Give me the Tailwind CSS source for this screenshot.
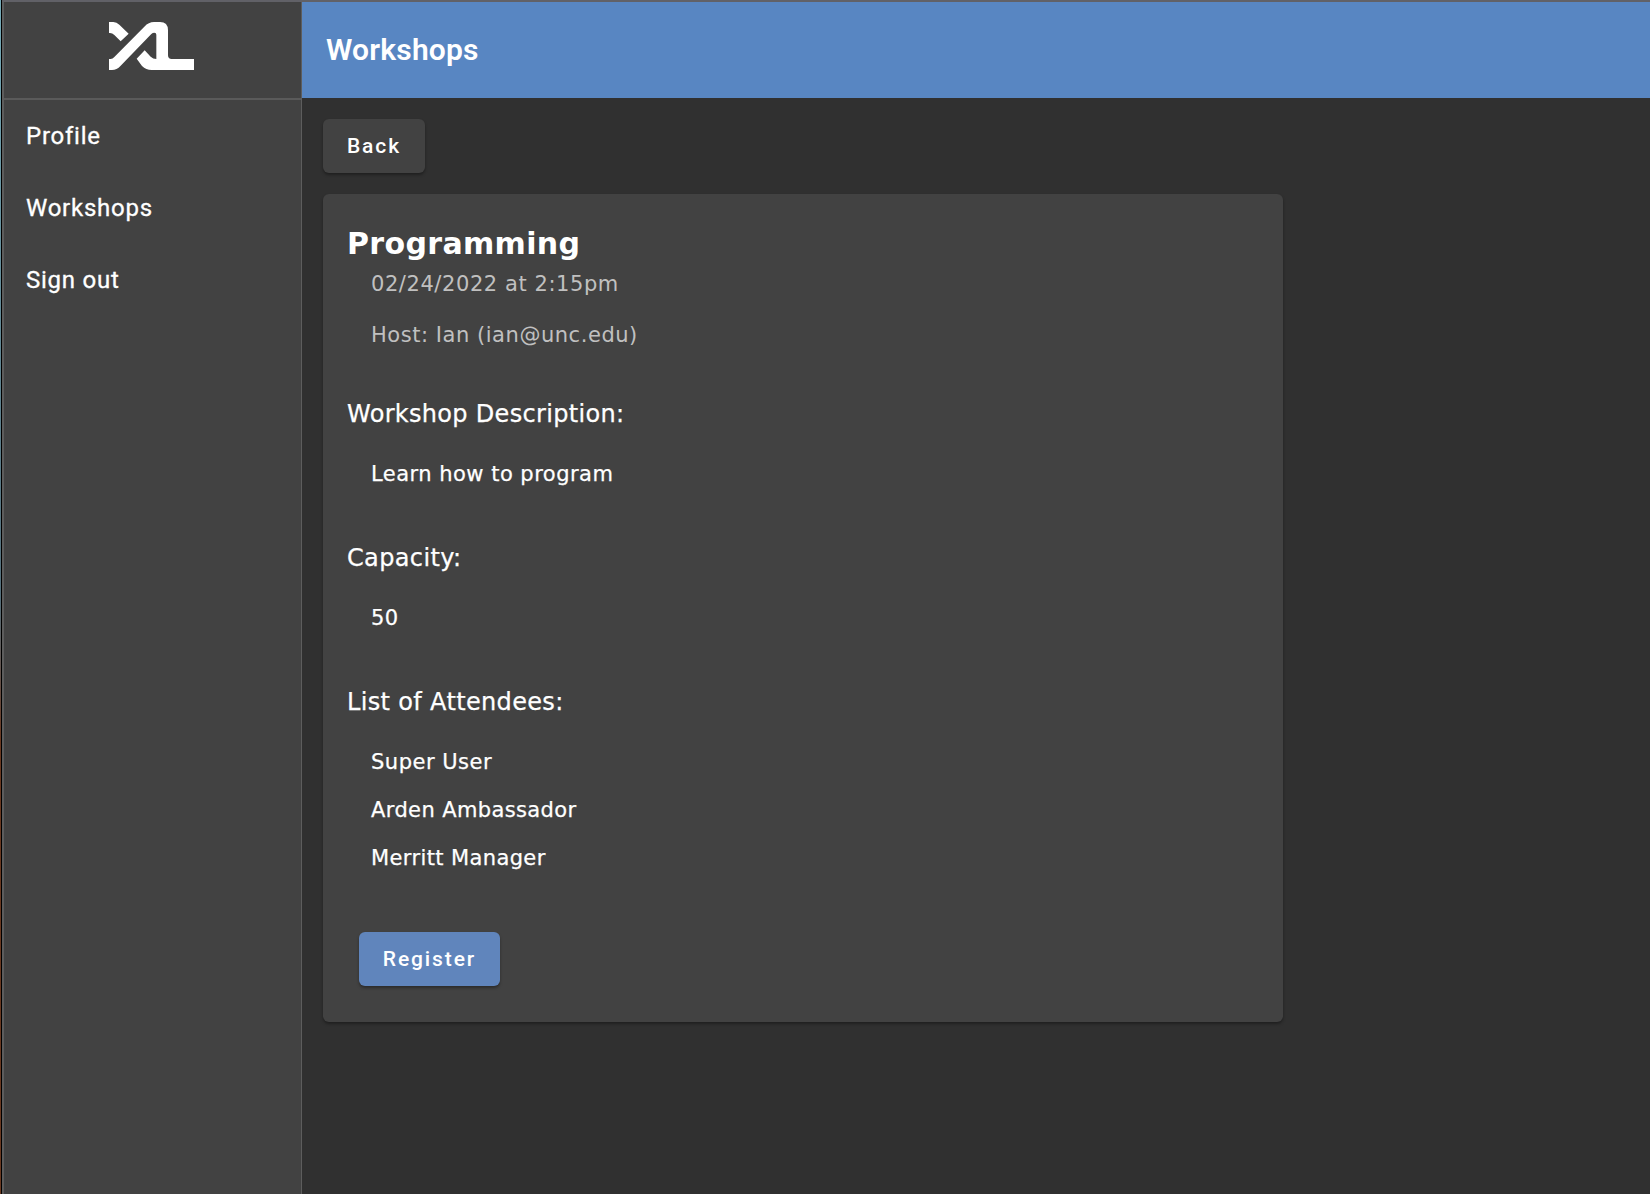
<!DOCTYPE html>
<html lang="en">
<head>
<meta charset="utf-8">
<title>Workshops</title>
<script src="https://cdn.jsdelivr.net/npm/@tailwindcss/browser@4"></script>
</head>
<body class="flex h-screen overflow-hidden bg-[#303030] font-['Roboto',sans-serif] text-white">
  <div class="w-px shrink-0 bg-linear-to-b from-[#76abb8] from-0% via-[#55707c] via-50% to-[#6b3a22] to-62%"></div>
  <div class="w-px shrink-0 bg-black"></div>
  <div class="flex min-w-0 flex-1 border-t-2 border-[#616167]">
    <aside class="flex w-[300px] shrink-0 flex-col border-r border-l-2 border-r-[#5d5d5d] border-l-[#5d5d5d] bg-[#424242]">
      <div class="flex h-[98px] justify-center border-b-2 border-[#5a5a5a] pt-5">
        <svg class="mr-0.5 h-12 w-[85px]" viewBox="57 66 255 144" fill="#fff">
          <path d="M57 66H70Q80 66 88 74L116 101L92 124L73 105Q67 99 60 99H57Z"/>
          <path d="M57 177H62Q68 177 73 171L163 80Q176 66 192 66H210Q234 66 234 91V166Q234 177 245 177H312V210H185Q168 210 156 198L140 176L164 151L182 170Q189 177 199 177V104Q199 98 193 98Q188 98 184 102L92 197Q80 210 66 210H57Z"/>
        </svg>
      </div>
      <nav class="flex flex-col pl-[22px] text-2xl/[72px] tracking-[0.75px] [-webkit-text-stroke:0.3px_white]">
        <a>Profile</a>
        <a>Workshops</a>
        <a>Sign out</a>
      </nav>
    </aside>
    <main class="flex min-w-0 flex-1 flex-col items-start">
      <header class="flex h-24 w-full items-center bg-[#5886c2] px-6">
        <h1 class="text-[30px]/[48px] font-semibold tracking-[0.2px]">Workshops</h1>
      </header>
      <button class="mt-[21px] ml-[21px] h-[54px] w-[102px] rounded-md bg-[#424242] pt-0.5 text-[21px] font-medium tracking-[1.9px] shadow-[0_2px_3px_rgba(0,0,0,0.35)]">Back</button>
      <section class="mt-[21px] ml-[21px] h-[828px] w-[960px] rounded-md bg-[#424242] px-6 pt-[26px] font-['Verdana','DejaVu_Sans',sans-serif] shadow-[0_2px_3px_rgba(0,0,0,0.35)]">
        <h2 class="text-[30px]/[48px] font-bold tracking-[0.35px]">Programming</h2>
        <p class="pl-6 text-[21px]/[32px] tracking-[0.57px] text-[#c0c0c0]">02/24/2022 at 2:15pm</p>
        <p class="mt-[19px] pl-6 text-[21px]/[32px] tracking-[0.54px] text-[#c0c0c0]">Host: Ian (ian@unc.edu)</p>
        <div class="[-webkit-text-stroke:0.25px_white]">
          <h3 class="mt-[45px] text-2xl/[36px] tracking-[0.31px]">Workshop Description:</h3>
          <p class="mt-[18px] pl-6 text-[21px]/[48px] tracking-[0.48px]">Learn how to program</p>
          <h3 class="mt-[42px] text-2xl/[36px] tracking-[0.36px]">Capacity:</h3>
          <p class="mt-[18px] pl-6 text-[21px]/[48px] tracking-[0.3px]">50</p>
          <h3 class="mt-[42px] text-2xl/[36px] tracking-[0.34px]">List of Attendees:</h3>
          <ul class="mt-[18px] pl-6 text-[21px]/[48px] tracking-[0.38px]">
            <li class="tracking-[0.5px]">Super User</li>
            <li>Arden Ambassador</li>
            <li>Merritt Manager</li>
          </ul>
        </div>
        <button class="mt-[50px] ml-3 h-[54px] w-[141px] rounded-md bg-[#6085bc] pt-0.5 font-['Roboto',sans-serif] text-[21px] font-medium tracking-[1.9px] shadow-[0_2px_3px_rgba(0,0,0,0.35)]">Register</button>
      </section>
    </main>
  </div>
</body>
</html>
